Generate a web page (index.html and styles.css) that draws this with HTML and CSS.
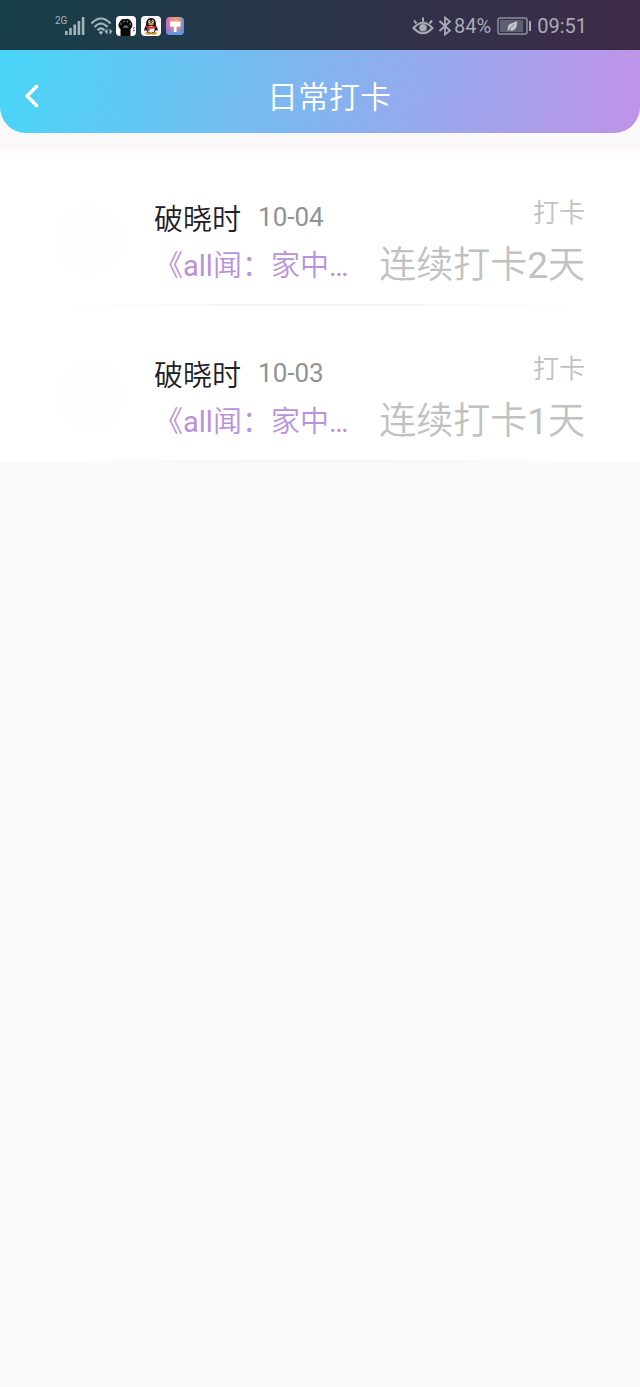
FILE: index.html
```html
<!DOCTYPE html>
<html lang="zh-CN">
<head>
<meta charset="utf-8">
<meta name="viewport" content="width=device-width, initial-scale=1">
<title>日常打卡</title>
<link rel="stylesheet" href="styles.css">
</head>
<body>
<div class="status">
  <div class="status-left">
    <span class="network">2G</span>
    <svg class="signal" width="20" height="20" viewBox="0 0 20 20" fill="#a5b4b9"><path d="M0 15h2.6v4H0zM4.2 12h2.6v7H4.2zM8.4 8.500h2.600v10.500h-2.600zM12.600 5h2.600v14h-2.600zM16.800 1h2.600v18h-2.600z"/></svg>
    <svg class="wifi" width="24" height="20" viewBox="0 0 24 20" fill="none" stroke="#a5b4b9" stroke-width="2.200"><path d="M1.500 7.500Q11 -2.500 20.500 7.500M4.500 11Q11 4 17.500 11M7.500 14.200Q11 10.500 14.500 14.200"/><path d="M8.700 16.200Q11 14 13 16.200L11 19z" fill="#a5b4b9" stroke="none"/><path d="M17.500 12.500v6L14.500 15.500zM19.500 12.500v6l3-3z" fill="#a5b4b9" stroke="none"/></svg>
    <svg class="app" width="20" height="20" viewBox="0 0 20 20"><rect width="20" height="20" rx="4" fill="#fff"/><path d="M4.500 20v-7C2.500 11.500 2 9 3 7l1-1.500C5 3 7 2.500 9 3.200 11 2 14 3 15 5.500c2 1.500 2 5.500-.5 7.500v7z" fill="#080808"/><g fill="#666"><ellipse cx="5" cy="7.800" rx=".8" ry="1.200"/><ellipse cx="8" cy="5.500" rx=".8" ry="1.200"/><ellipse cx="11.500" cy="5.500" rx=".8" ry="1.200"/><ellipse cx="14.300" cy="8" rx=".8" ry="1.200"/><path d="M6.800 11.500Q9.700 6.500 12.800 11.500 11.500 12.500 9.700 11.800 8 12.500 6.800 11.500z"/></g><path d="M17 13l1.500-2M17 15l2-1" stroke="#444"/></svg>
    <svg class="app" width="20" height="20" viewBox="0 0 20 20"><rect width="20" height="20" rx="4" fill="#fff"/><ellipse cx="7" cy="17.300" rx="3" ry="1.500" fill="#f2a51d"/><ellipse cx="13" cy="17.300" rx="3" ry="1.500" fill="#f2a51d"/><path d="M5 9.500Q4.500 2 10 2t5 7.500q2.200 3 1.800 5.300-.8.500-1.800-1Q14 17.500 10 17.500T5 13.800q-1 1.500-1.800 1Q2.800 12.500 5 9.500z" fill="#151515"/><ellipse cx="10" cy="13.300" rx="3.600" ry="3.500" fill="#fff"/><ellipse cx="8.400" cy="5.500" rx="1.100" ry="1.500" fill="#fff"/><ellipse cx="11.600" cy="5.500" rx="1.100" ry="1.500" fill="#fff"/><circle cx="8.700" cy="5.600" r=".5"/><circle cx="11.300" cy="5.600" r=".5"/><ellipse cx="10" cy="8" rx="3" ry="1" fill="#f2a51d"/><path d="M4.800 9.500Q10 12 15.200 9.500v2Q11.500 13 8.500 12.600v2.600H6.200v-3.300l-1.400-.6z" fill="#e0242b"/></svg>
    <svg class="app" width="18" height="18" viewBox="0 0 18 18"><defs><linearGradient id="paint" x1="0" y1="0" x2="1" y2="0"><stop offset="0" stop-color="#c46bd0"/><stop offset=".35" stop-color="#f28a80"/><stop offset=".65" stop-color="#f0a06c"/><stop offset="1" stop-color="#5b8be8"/></linearGradient><linearGradient id="shade" x1="0" y1="0" x2="0" y2="1"><stop offset=".5" stop-color="#5d75ef" stop-opacity="0"/><stop offset="1" stop-color="#4f9cf2"/></linearGradient></defs><rect width="18" height="18" rx="4" fill="url(#paint)"/><rect width="18" height="18" rx="4" fill="url(#shade)"/><path d="M4 4.500h10.500v5h-4V15H7.800V9.500H4z" fill="#fff"/></svg>
  </div>
  <div class="status-right">
    <svg width="22" height="20" viewBox="0 0 22 20" fill="none" stroke="#a9abb7" stroke-width="2"><path d="M1.500 12Q11 1.500 20.500 12 11 22.500 1.500 12zM2 4.500l2.500 3M11 1.500v4M20 4.500l-2.500 3"/><circle cx="11" cy="11.800" r="3.800" fill="#a9abb7" stroke="none"/></svg>
    <svg class="bluetooth" width="14" height="20" viewBox="0 0 14 20" fill="none" stroke="#a9abb7" stroke-width="1.800"><path d="M1.500 5l10.500 9.500L7 18.500V1.500l5 4L1.500 15"/></svg>
    <span>84%</span>
    <svg class="battery" width="34" height="18" viewBox="0 0 34 18"><rect x="1" y="1" width="29" height="16" rx="2" fill="none" stroke="#8e8f9f" stroke-width="1.500"/><rect x="3" y="3" width="23" height="12" fill="#5c5e71"/><rect x="32" y="4" width="2" height="10" fill="#a9abb7"/><path d="M11 14Q9.500 8 14 6.500q3-1 6-2.500.5 8-4 9.500-2 .6-3.500-.5L11 14z" fill="#c4c5cd"/><path d="M12 13l5-6" stroke="#646678" stroke-width=".7"/></svg>
    <time>09:51</time>
  </div>
</div>
<header class="header">
  <button class="back" type="button" aria-label="返回"><svg width="16" height="24" viewBox="0 0 16 24" fill="none" stroke="#fff" stroke-width="3.600" stroke-linecap="round" stroke-linejoin="round"><path d="M12.500 2.500L3 12l9.500 9.500"/></svg></button>
  <h1 class="title">日常打卡</h1>
</header>
<main class="list">
  <article class="row">
    <div class="avatar"></div>
    <div class="info">
      <div class="who"><span class="name">破晓时</span><time class="date">10-04</time></div>
      <a class="book" href="#">《<span class="latin">all</span>闻：家中<span class="latin">…</span></a>
    </div>
    <div class="result"><span class="label">打卡</span><span class="streak">连续打卡<span class="latin">2</span>天</span></div>
  </article>
  <article class="row">
    <div class="avatar"></div>
    <div class="info">
      <div class="who"><span class="name">破晓时</span><time class="date">10-03</time></div>
      <a class="book" href="#">《<span class="latin">all</span>闻：家中<span class="latin">…</span></a>
    </div>
    <div class="result"><span class="label">打卡</span><span class="streak">连续打卡<span class="latin">1</span>天</span></div>
  </article>
</main>
</body>
</html>
```
FILE: styles.css
```css
* { box-sizing: border-box; }

body {
  margin: 0;
  min-height: 100vh;
  background: #faf8f9;
  font-family: Roboto, "Noto Sans CJK SC", sans-serif;
  font-weight: 350;
}

.latin { font-weight: 400; }

.status {
  display: flex;
  justify-content: space-between;
  align-items: center;
  height: 50px;
  padding: 2px 53px 0 55px;
  background: linear-gradient(100deg, #163f49, #2d3349 55%, #3e2b48);
  color: #a9abb7;
  font-size: 20px;
  font-weight: 400;
}

.status-left,
.status-right {
  display: flex;
  align-items: center;
}

.network {
  align-self: flex-start;
  width: 10px;
  font-size: 10px;
  line-height: 10px;
  white-space: nowrap;
  color: #a5b4b9;
}

.wifi { margin: 0 2px 0 5px; }
.app { margin-right: 5px; }
.bluetooth { margin: 0 2px 0 4px; }
.battery { margin: 0 6px; }

.header {
  display: grid;
  grid-template-columns: 64px 1fr 64px;
  align-items: center;
  height: 83px;
  padding-top: 9px;
  border-radius: 0 0 26px 26px;
  background: linear-gradient(100deg, #48d6f8, #82b4ef 50%, #c092e8);
}

.back {
  display: flex;
  justify-content: center;
  padding: 20px 0;
  border: 0;
  background: none;
}

.title {
  grid-column: 2;
  margin: 0;
  padding: 3px 0 0 18px;
  color: #fff;
  font-size: 31px;
  font-weight: 350;
  line-height: 44px;
  text-align: center;
}

.list {
  margin-top: 17px;
  background: #fff;
}

.row {
  display: flex;
  height: 156px;
  padding: 43px 55px 0;
  background: linear-gradient(90deg, #fff 10%, #f5f4f5 40%, #f5f4f5 60%, #fff 90%) bottom / 100% 2px no-repeat;
}

.avatar {
  flex: none;
  width: 70px;
  height: 70px;
  margin: 12px 29px 0 0;
  border-radius: 50%;
  background: #fefefe;
}

.info {
  flex: 1;
  min-width: 0;
}

.who {
  display: flex;
  align-items: center;
  gap: 17px;
  height: 48px;
}

.name {
  color: #202027;
  font-size: 29px;
}

.date {
  color: #929294;
  font-size: 26px;
  font-weight: 400;
}

.book {
  display: block;
  color: #b991dc;
  font-size: 29px;
  line-height: 50px;
  text-decoration: none;
  white-space: nowrap;
}

.result {
  display: flex;
  flex: none;
  flex-direction: column;
  align-items: flex-end;
  color: #c1c1c1;
}

.label {
  font-size: 26px;
  line-height: 40px;
}

.streak {
  font-size: 37px;
  line-height: 66px;
}
```
